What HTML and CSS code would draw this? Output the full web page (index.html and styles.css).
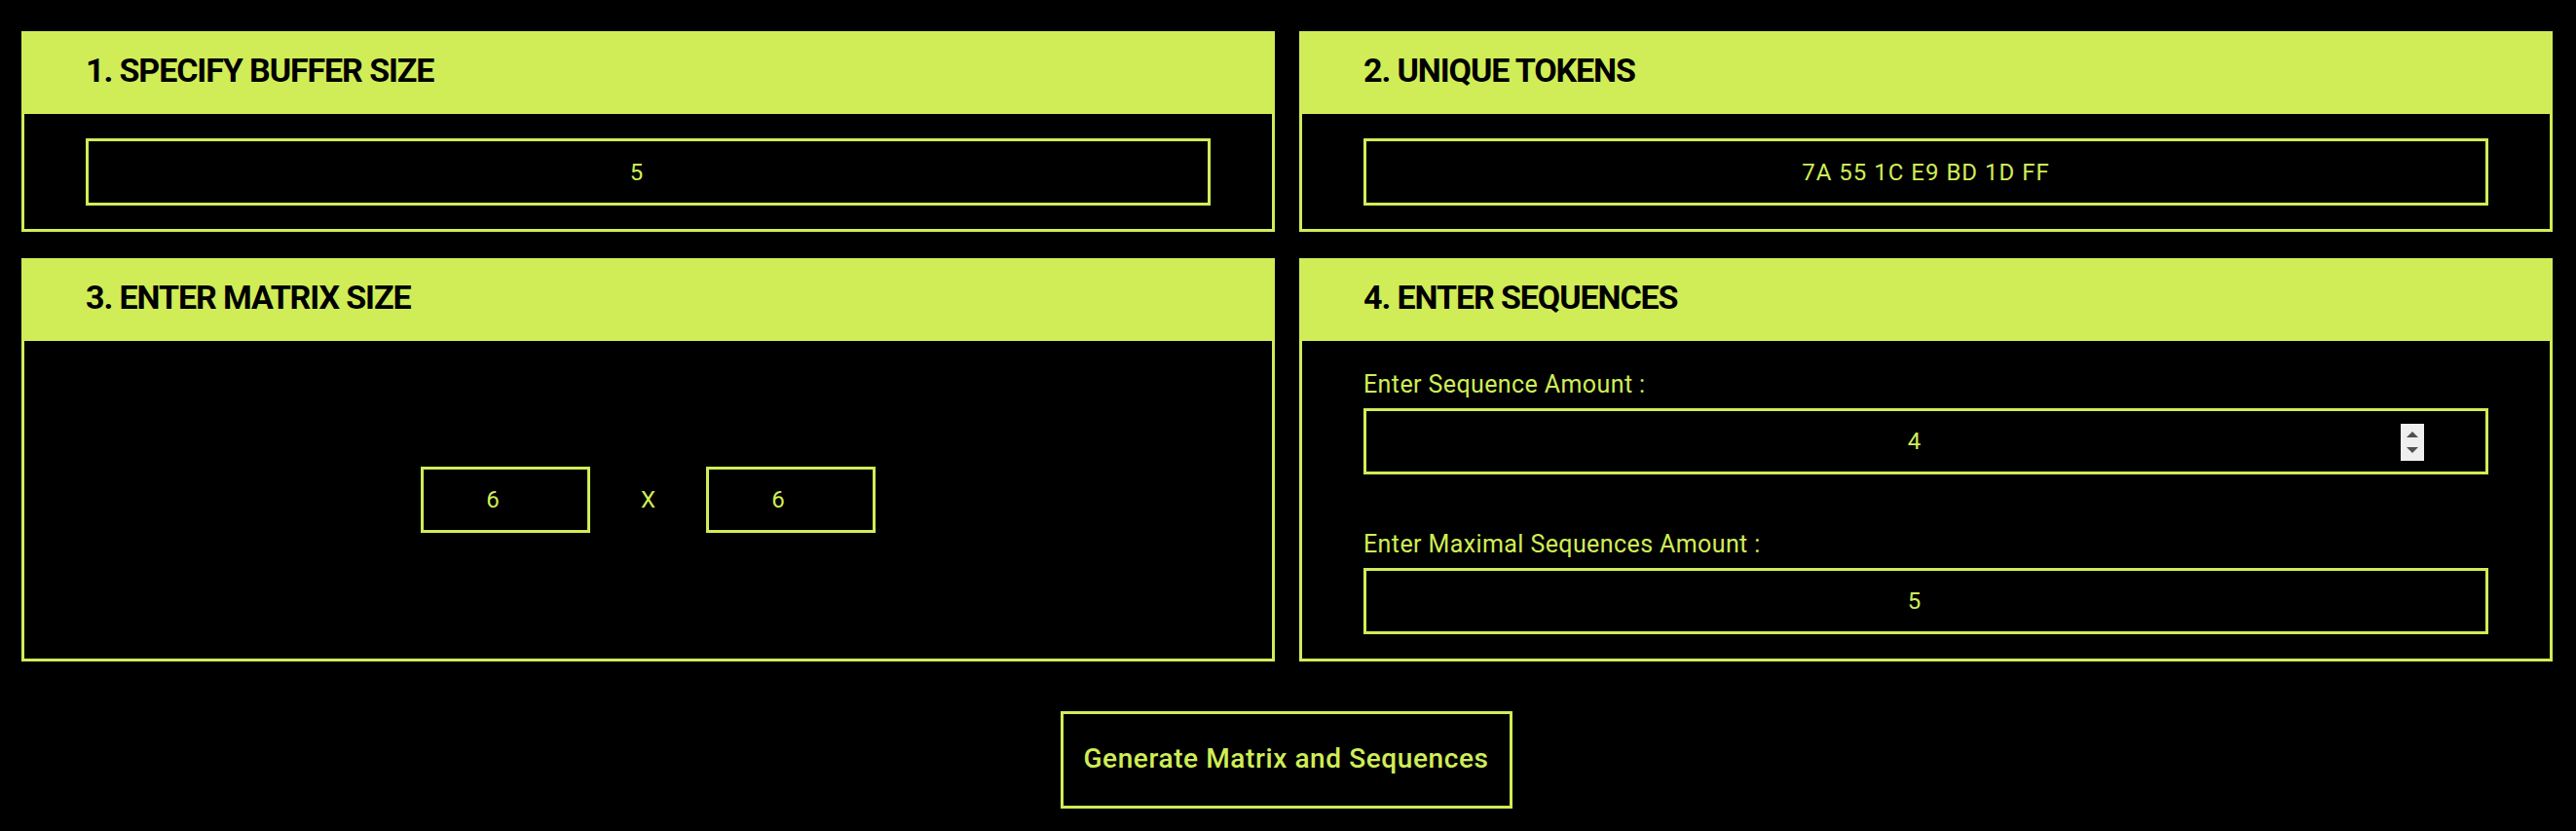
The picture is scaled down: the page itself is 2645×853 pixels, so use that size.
FILE: index.html
```html
<!DOCTYPE html>
<html lang="en">
<head>
<meta charset="utf-8">
<title>Breach Protocol Input</title>
<link rel="stylesheet" href="styles.css">
</head>
<body>
<main class="page">
  <section class="grid">
    <div class="card">
      <div class="card-head"><h2 class="card-title">1. SPECIFY BUFFER SIZE</h2></div>
      <div class="card-body">
        <input class="field" type="text" value="5">
      </div>
    </div>
    <div class="card">
      <div class="card-head"><h2 class="card-title">2. UNIQUE TOKENS</h2></div>
      <div class="card-body">
        <input class="field field-text" type="text" value="7A 55 1C E9 BD 1D FF">
      </div>
    </div>
    <div class="card">
      <div class="card-head"><h2 class="card-title">3. ENTER MATRIX SIZE</h2></div>
      <div class="card-body matrix-body">
        <input class="field small-field" type="text" value="6">
        <span class="times">X</span>
        <input class="field small-field" type="text" value="6">
      </div>
    </div>
    <div class="card">
      <div class="card-head"><h2 class="card-title">4. ENTER SEQUENCES</h2></div>
      <div class="card-body seq-body">
        <label class="label">Enter Sequence Amount :</label>
        <div class="spin-wrap">
          <input class="field" type="text" value="4">
          <span class="spinner"><span class="arrow up"></span><span class="arrow down"></span></span>
        </div>
        <label class="label label-second">Enter Maximal Sequences Amount :</label>
        <input class="field" type="text" value="5">
      </div>
    </div>
  </section>
  <div class="actions">
    <button class="generate" type="button">Generate Matrix and Sequences</button>
  </div>
</main>
</body>
</html>
```

FILE: styles.css
```css
* { box-sizing: border-box; }

html, body {
  margin: 0;
  background: #000;
}

body {
  font-family: Roboto, "Liberation Sans", sans-serif;
  color: #d0ed57;
}

.page {
  padding: 32px 24px 0 22px;
}

.grid {
  display: grid;
  grid-template-columns: 1fr 1fr;
  column-gap: 25px;
  row-gap: 27px;
}

.card {
  border: 3px solid #d0ed57;
  display: flex;
  flex-direction: column;
}

.card-head {
  background: #d0ed57;
  margin: -3px -3px 0 -3px;
  height: 85px;
  padding-left: 66px;
  display: flex;
  align-items: center;
}

.card-title {
  margin: 0 0 6px 0;
  font-size: 34px;
  font-weight: 700;
  color: #000;
  line-height: 1;
  letter-spacing: -1.1px;
}

.card-body {
  padding: 25px 63px 24px 63px;
  flex: 1;
}

.field {
  display: block;
  width: 100%;
  height: 69px;
  border: 3px solid #d0ed57;
  background: #000;
  color: #d0ed57;
  font-family: inherit;
  font-size: 24px;
  text-align: center;
  padding: 0 87px 0 63px;
  outline: none;
}

.field-text {
  padding: 0 63px;
  letter-spacing: 1px;
}

.matrix-body {
  display: flex;
  align-items: center;
  justify-content: center;
  padding: 0;
}

.small-field {
  width: 174px;
  height: 68px;
  padding: 0 26px 0 0;
}

.times {
  width: 119px;
  text-align: center;
  font-size: 24px;
}

.seq-body {
  padding: 30px 63px 25px 63px;
}

.label {
  display: block;
  font-size: 25px;
  line-height: 30px;
  letter-spacing: 0.4px;
  margin-bottom: 9px;
}

.label-second {
  margin-top: 57px;
}

.seq-body .field {
  height: 68px;
}

.spin-wrap {
  position: relative;
}

.spinner {
  position: absolute;
  right: 66px;
  top: 16px;
  width: 24px;
  height: 38px;
  background: #efefef;
  display: flex;
  flex-direction: column;
  align-items: center;
  justify-content: center;
  gap: 10px;
}

.arrow {
  width: 0;
  height: 0;
  border-left: 6px solid transparent;
  border-right: 6px solid transparent;
}

.arrow.up {
  border-bottom: 6px solid #505050;
}

.arrow.down {
  border-top: 6px solid #505050;
}

.actions {
  display: flex;
  justify-content: center;
  padding: 51px 2px 0 0;
}

.generate {
  width: 464px;
  height: 100px;
  padding: 0 0 3px 0;
  white-space: nowrap;
  background: #000;
  border: 3px solid #d0ed57;
  color: #d0ed57;
  font-family: inherit;
  font-size: 28px;
  font-weight: 500;
  letter-spacing: 0.6px;
  cursor: pointer;
}
```
